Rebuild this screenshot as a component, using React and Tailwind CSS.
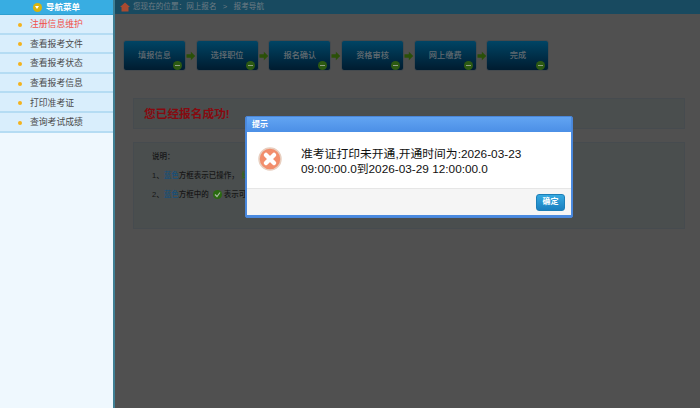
import React from 'react';

const font = { fontFamily: '"Liberation Sans", "Noto Sans CJK SC", sans-serif' };

const menu = ['注册信息维护', '查看报考文件', '查看报考状态', '查看报考信息', '打印准考证', '查询考试成绩'];
const steps = ['填报信息', '选择职位', '报名确认', '资格审核', '网上缴费', '完成'];

function Step({ label, last }) {
    return (
        <div className="flex items-center">
            <div className="relative flex h-[31px] w-[63px] items-center justify-center rounded-[3px] border border-[#454a4e] bg-gradient-to-b from-[#004565] to-[#001c30] text-[8.2px] font-medium text-[#626b71]">
                <span className="mt-[2px]">{label}</span>
                <span className="absolute bottom-[0px] right-[3px] flex h-[9px] w-[9px] items-center justify-center rounded-full bg-[#2c5a12]">
                    <span className="h-[1.5px] w-[5px] bg-[#8f9c88]"></span>
                </span>
            </div>
            {!last && (
                <svg width="9.7" height="10" viewBox="0 0 10 10" className="shrink-0">
                    <path d="M0.5 3.2h4.5V0.5l4.5 4.5-4.5 4.5V6.8H0.5z" fill="#2a5008" />
                </svg>
            )}
        </div>
    );
}

export default function App() {
    return (
        <div className="relative flex h-[408px] w-[700px] overflow-hidden bg-[#505050]" style={font}>
            <aside className="flex w-[115px] shrink-0 flex-col border-r-2 border-[#3f7f94] bg-[#eff8fe]">
                <div className="flex h-[15px] items-center justify-center gap-[4px] border-b border-[#2f9fd0] bg-[#38ade2] text-[8.5px] font-bold text-white">
                    <span className="flex h-[9px] w-[9px] items-center justify-center rounded-full bg-[#d8b40c]">
                        <span className="h-0 w-0 border-x-[2.5px] border-t-[3px] border-x-transparent border-t-white"></span>
                    </span>
                    <span>导航菜单</span>
                </div>
                {menu.map((item, i) => (
                    <div
                        key={item}
                        className={`flex h-[19.6px] items-center border-b-2 border-[#b5dcf3] bg-[#d9eefc] pl-[18px] pt-[2px] text-[8.8px] ${i === 0 ? 'text-[#f2504a]' : 'text-[#4a4a4a]'}`}
                    >
                        <span className="h-[4px] w-[4px] rounded-full bg-[#f4b21c]"></span>
                        <span className="ml-[8px]">{item}</span>
                    </div>
                ))}
            </aside>

            <main className="flex min-w-0 flex-1 flex-col">
                <div className="flex h-[14px] items-center gap-[3px] bg-[#184a60] pl-[5px] text-[7.6px] text-[#6e7c84]">
                    <svg width="10" height="10" viewBox="0 0 10 10">
                        <path d="M5 0.5 0 5h1.5v4.5h7V5H10z" fill="#a84a30" />
                    </svg>
                    <span>您现在的位置：网上报名&nbsp;&nbsp;&nbsp;&gt;&nbsp;&nbsp;&nbsp;报考导航</span>
                </div>

                <div className="ml-[8px] mt-[26px] flex">
                    {steps.map((s, i) => (
                        <Step key={s} label={s} last={i === steps.length - 1} />
                    ))}
                </div>

                <div className="ml-[18px] mr-[15px] mt-[27px] flex h-[31px] items-center border border-[#464b4f] bg-[#4a4e4e] pl-[10px] text-[11.7px] font-bold text-[#860a10]">
                    您已经报名成功!
                </div>

                <div className="ml-[18px] mr-[15px] mt-[13px] h-[87px] border border-[#464b4f] bg-[#4a4e4e] pl-[18px] pt-[8px] text-[7.5px] font-medium leading-[11px] text-[#161616]">
                    <p>说明：</p>
                    <p className="mt-[8px]">
                        1、<span className="text-[#16507a]">蓝色</span>方框表示已操作，
                        <span className="ml-[3px] text-[#2a6a10]">绿色</span>
                    </p>
                    <p className="mt-[8px] flex items-center">
                        2、<span className="text-[#16507a]">蓝色</span>方框中的
                        <span className="ml-[4px] mr-[2px] flex h-[9px] w-[9px] items-center justify-center rounded-full bg-[#2a6a10]">
                            <svg width="7" height="7" viewBox="0 0 7 7">
                                <path d="M1 3.5 3 5.5 6 1.5" fill="none" stroke="#a8b8a0" strokeWidth="1.2" />
                            </svg>
                        </span>
                        表示可
                    </p>
                </div>
            </main>

            <div className="absolute left-[245px] top-[116px] flex h-[102px] w-[328px] flex-col rounded-[2px] border border-[#4a86d8] bg-[#4a8ae0] px-[1px] pb-[2px]">
                <div className="flex h-[15px] items-center bg-gradient-to-b from-[#62a4f2] to-[#4b8fe6] pl-[5px] text-[8px] font-bold text-white">
                    提示
                </div>
                <div className="flex h-[56px] items-start bg-white pl-[11px] pt-[15px]">
                    <svg width="24" height="24" viewBox="0 0 24 24" className="shrink-0">
                        <circle cx="12" cy="12" r="11" fill="#f28e6c" stroke="#e8cfc0" strokeWidth="1.5" />
                        <path d="M8 8l8 8M16 8l-8 8" stroke="#fff" strokeWidth="4.5" strokeLinecap="round" />
                    </svg>
                    <p className="ml-[19px] w-[240px] text-[11.8px] leading-[15px] text-[#111]">
                        准考证打印未开通,开通时间为:2026-03-23 09:00:00.0到2026-03-29 12:00:00.0
                    </p>
                </div>
                <div className="flex flex-1 items-center justify-end border-t border-[#e6e6e6] bg-[#f5f5f5] pr-[6px]">
                    <button className="flex h-[17px] w-[29px] items-center justify-center rounded-[3px] border border-[#1c7fb8] bg-gradient-to-b from-[#36a9e0] to-[#1a80c0] text-[8px] font-bold text-white">
                        确定
                    </button>
                </div>
            </div>
        </div>
    );
}
